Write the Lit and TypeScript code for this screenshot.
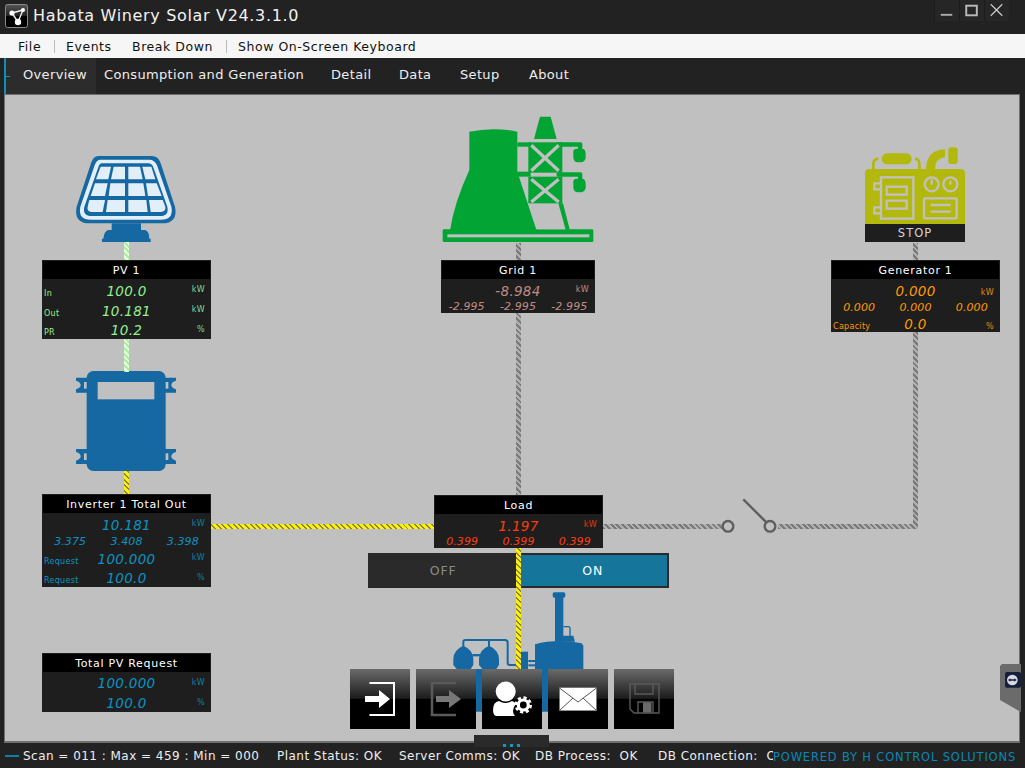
import { LitElement, html, css, svg } from "lit";
import { customElement } from "lit/decorators.js";

const OX = 5, OY = 95;
const box = (x: number, y: number, w: number, h: number) =>
  `left:${x - OX}px;top:${y - OY}px;width:${w}px;height:${h}px`;

type Row =
  | { h: number; label?: string; value: string; unit?: string; drop?: boolean }
  | { h: number; phases: string[] };
interface Panel { title: string; x: number; y: number; w: number; h: number; color: string; unitColor: string; rows: Row[] }

const BLUE = "#0b93c2", BLUE2 = "#0c7fa8";
const panels: Panel[] = [
  { title: "PV 1", x: 42, y: 260, w: 169, h: 79, color: "#93f08f", unitColor: "#7fd8a0", rows: [
    { h: 21, label: "In", value: "100.0", unit: "kW" },
    { h: 19, label: "Out", value: "10.181", unit: "kW" },
    { h: 20, label: "PR", value: "10.2", unit: "%" } ] },
  { title: "Grid 1", x: 441, y: 260, w: 154, h: 53, color: "#c08c84", unitColor: "#c08c84", rows: [
    { h: 21, value: "-8.984", unit: "kW" },
    { h: 13, phases: ["-2.995", "-2.995", "-2.995"] } ] },
  { title: "Generator 1", x: 831, y: 260, w: 169, h: 72, color: "#ff9a00", unitColor: "#e08a10", rows: [
    { h: 21, value: "0.000", unit: "kW", drop: true },
    { h: 14, phases: ["0.000", "0.000", "0.000"] },
    { h: 18, label: "Capacity", value: "0.0", unit: "%", drop: true } ] },
  { title: "Inverter 1 Total Out", x: 42, y: 494, w: 169, h: 93, color: BLUE, unitColor: BLUE2, rows: [
    { h: 21, value: "10.181", unit: "kW" },
    { h: 14, phases: ["3.375", "3.408", "3.398"] },
    { h: 19, label: "Request", value: "100.000", unit: "kW" },
    { h: 20, label: "Request", value: "100.0", unit: "%" } ] },
  { title: "Load", x: 434, y: 495, w: 169, h: 53, color: "#ff3d0c", unitColor: "#e0380c", rows: [
    { h: 21, value: "1.197", unit: "kW" },
    { h: 13, phases: ["0.399", "0.399", "0.399"] } ] },
  { title: "Total PV Request", x: 42, y: 653, w: 169, h: 59, color: BLUE, unitColor: BLUE2, rows: [
    { h: 20, value: "100.000", unit: "kW" },
    { h: 20, value: "100.0", unit: "%" } ] },
];

const wires: { x: number; y: number; w: number; h: number; c: string }[] = [
  { x: 124, y: 242, w: 5, h: 18, c: "green" },
  { x: 124, y: 339, w: 5, h: 33, c: "green" },
  { x: 124, y: 471, w: 5, h: 24, c: "yellow" },
  { x: 211, y: 524, w: 224, h: 5, c: "yellow" },
  { x: 516, y: 548, w: 5, h: 122, c: "yellow" },
  { x: 516, y: 243, w: 5, h: 252, c: "gray" },
  { x: 913, y: 243, w: 5, h: 285, c: "gray" },
  { x: 603, y: 524, w: 120, h: 5, c: "gray" },
  { x: 778, y: 524, w: 140, h: 5, c: "gray" },
];

const tabs = [
  { t: "Overview", x: 23, w: 73 },
  { t: "Consumption and Generation", x: 104, w: 227 },
  { t: "Detail", x: 331, w: 68 },
  { t: "Data", x: 399, w: 61 },
  { t: "Setup", x: 460, w: 69 },
  { t: "About", x: 529, w: 60 },
];

const solar = svg`
  <path fill="#1668a2" d="M205 48H365Q385 48 392 70L435 200Q445 250 395 250H180Q130 250 140 200L183 70Q190 48 205 48Z"/>
  <path fill="#e3eff8" d="M212 59H358Q374 59 381 76L424 200Q432 239 392 239H183Q143 239 151 200L194 76Q199 59 212 59Z"/>
  <path fill="#1668a2" d="M216 70H354Q366 70 370 82L412 200Q418 228 390 228H185Q157 228 163 200L205 82Q208 70 216 70Z"/>
  <g fill="#e3eff8">
    <path d="M212 80H243L235 118H198Z"/><path d="M251 80H285V118H243Z"/><path d="M295 80H330L338 118H295Z"/><path d="M337 80H364L376 118H346Z"/>
    <path d="M195 130H233L225 168H182Z"/><path d="M241 130H285V168H236Z"/><path d="M295 130H340L346 168H295Z"/><path d="M348 130H380L395 168H354Z"/>
    <path d="M178 180H225L218 216H185Q170 214 173 200Z"/><path d="M233 180H285V216H228Z"/><path d="M295 180H349L353 216H295Z"/><path d="M357 180H398L406 200Q408 214 392 216H362Z"/>
  </g>
  <path fill="#1668a2" d="M245 250H333V270H345Q358 274 358 296H362V306H216V296H220Q222 274 235 270H245Z"/>`;

const inverter = svg`
  <g fill="#1668a2">
    <rect x="170" y="33" width="237" height="300" rx="20"/>
    <path d="M138 53H172V98H138V88Q152 84 152 75Q152 66 138 62Z"/>
    <path d="M138 267H172V312H138V302Q152 298 152 289Q152 280 138 276Z"/>
    <path d="M438 53H404V98H438V88Q424 84 424 75Q424 66 438 62Z"/>
    <path d="M438 267H404V312H438V302Q424 298 424 289Q424 280 438 276Z"/>
  </g>
  <g fill="#c0c0c0">
    <rect x="203" y="66" width="170" height="52"/>
    <rect x="162" y="66" width="8" height="20"/><rect x="162" y="280" width="8" height="20"/>
    <rect x="407" y="66" width="8" height="20"/><rect x="407" y="280" width="8" height="20"/>
  </g>`;

const tower = svg`
  <g fill="#02a533">
    <path d="M118 65Q190 50 262 65V185L320 362H60Q72 280 118 180Z"/>
    <path d="M330 20H362L380 87H312Z"/>
    <rect x="295" y="97" width="102" height="91"/>
    <rect x="295" y="200" width="102" height="80"/>
    <rect x="262" y="97" width="40" height="13"/><rect x="262" y="185" width="40" height="15"/>
    <rect x="380" y="97" width="68" height="13" rx="3"/><rect x="380" y="187" width="68" height="13" rx="3"/>
    <rect x="444" y="97" width="13" height="30" rx="5"/><rect x="444" y="187" width="13" height="30" rx="5"/>
    <path d="M430 124Q430 116 440 116H455Q467 116 467 132V142Q467 157 450 157H445Q430 157 430 142Z"/>
    <path d="M430 214Q430 206 440 206H455Q467 206 467 222V232Q467 247 450 247H445Q430 247 430 232Z"/>
    <path d="M385 280H399L420 362H408Z"/>
    <rect x="38" y="358" width="452" height="38" rx="4"/>
  </g>
  <g stroke="#c0c0c0" stroke-width="10" fill="none">
    <path d="M304 106L386 182M386 106L304 182M304 208L386 276M386 208L304 276"/>
  </g>
  <rect x="52" y="373" width="426" height="9" fill="#c0c0c0"/>
  <path d="M306 293H385L404 358H322Q315 320 306 293Z" fill="#c0c0c0"/>`;

const generator = svg`
  <g fill="#b3b80c">
    <path d="M135 100Q135 87 148 87H422Q435 87 435 100V252H135Z"/>
    <rect x="185" y="40" width="90" height="33" rx="16"/>
    <rect x="385" y="22" width="28" height="50" rx="8"/>
    <path d="M318 87Q320 30 375 28V52Q345 55 345 87Z"/>
  </g>
  <path d="M160 87V70Q160 58 175 56M285 56Q298 58 298 70V87" stroke="#b3b80c" stroke-width="8" fill="none"/>
  <g fill="none" stroke="#c0c0c0" stroke-width="7">
    <rect x="183" y="112" width="97" height="124"/>
    <rect x="200" y="140" width="60" height="24"/>
    <rect x="200" y="182" width="60" height="24"/>
    <path d="M183 130H163V148H183M183 202H163V220H183"/>
    <circle cx="335" cy="133" r="21"/><circle cx="391" cy="133" r="21"/>
    <path d="M335 118V134M391 122V134"/>
    <rect x="312" y="175" width="98" height="60" rx="3"/>
    <path d="M332 195H392M332 215H392"/>
  </g>`;

const factory = svg`
  <g fill="#1668a2">
    <rect x="645" y="30" width="25" height="125"/>
    <rect x="638" y="22" width="38" height="16" rx="5"/>
    <path d="M645 152H700L705 170H645Z"/>
    <path d="M585 178Q650 160 725 175L730 182V380H408V252H585Z"/>
    <rect x="542" y="200" width="22" height="60"/>
    <path d="M370 182Q340 195 340 222V240L350 252H392L400 240V222Q400 195 370 182Z"/>
    <path d="M447 182Q417 195 417 222V240L427 252H469L477 240V222Q477 195 447 182Z"/>
    <rect x="398" y="207" width="22" height="7"/>
    <rect x="565" y="225" width="22" height="6"/><rect x="565" y="238" width="22" height="6"/>
  </g>
  <path d="M370 185V170Q370 165 376 165H495Q503 165 503 173V235Q503 240 510 240H530M447 185V165" fill="none" stroke="#1668a2" stroke-width="6"/>
  <path d="M670 125H685Q690 125 690 130V153" fill="none" stroke="#1668a2" stroke-width="4"/>`;

@customElement("app-root")
export class AppRoot extends LitElement {
  static styles = css`
    :host { display: block; height: 100vh; overflow: hidden; font-family: "DejaVu Sans", sans-serif; background: #222; color: #fff; }
    .app { display: flex; flex-direction: column; height: 768px; }
    .title { height: 34px; flex: none; background: #222; display: flex; align-items: center; padding-left: 5px; gap: 5px; position: relative; }
    .logo { width: 23px; height: 24px; margin-top: -3px; flex: none; display: block; }
    .title-text { font-size: 16px; letter-spacing: 0.66px; color: #f2f2f2; margin-top: -4px; white-space: nowrap; }
    .win { position: absolute; left: 934px; top: 0; width: 75px; height: 21px; display: grid; grid-template-columns: repeat(3, 1fr); background: #262626; border-radius: 0 0 3px 3px; }
    .win svg { display: block; width: 25px; height: 21px; border-left: 1px solid #1c1c1c; box-sizing: border-box; }
    .menu { height: 24px; flex: none; background: #f6f6f6; color: #111; display: flex; align-items: center; font-size: 12.5px; padding-left: 18px; box-sizing: border-box; letter-spacing: 0.55px; white-space: nowrap; }
    .menu .sep { width: 1px; height: 13px; background: #bbb; flex: none; }
    .m-file { width: 36px; } .m-events { width: 66px; margin-left: 11px; } .m-break { width: 94px; }
    .m-osk { margin-left: 11px; }
    .tabs { height: 36px; flex: none; position: relative; background: #222; display: flex; align-items: center; font-size: 13px; letter-spacing: 0.34px; white-space: nowrap; box-sizing: border-box; padding-left: 6px; }
    .tabs .rail { position: absolute; left: 4px; top: 0; bottom: 0; width: 2px; background: #0e8fb8; }
    .tabs .dash { position: absolute; left: 6px; top: 18px; width: 4px; height: 1px; background: #0e8fb8; }
    .tab { height: 36px; line-height: 34px; flex: none; box-sizing: border-box; color: #eee; }
    .tab.on { background: #2c2c2c; }
    .main { flex: 1; min-height: 0; padding: 0 5px 0 4px; background: #222; display: flex; }
    .canvas { flex: 1; position: relative; background: #c0c0c0; border: 1px solid #6e6e6e; border-bottom-width: 2px; box-sizing: border-box; }
    .abs { position: absolute; }
    .abs > svg { display: block; width: 100%; height: 100%; overflow: visible; }
    .wire { position: absolute; }
    .wire.green { background: repeating-linear-gradient(45deg, #a8f29c 0 2px, #ecffe6 2px 4px); }
    .wire.yellow { background: repeating-linear-gradient(45deg, #fff000 0 2.6px, #85854f 2.6px 4px); }
    .wire.gray { background: repeating-linear-gradient(45deg, #7a7a7a 0 2px, #b0b0b0 2px 4px); }
    .panel { position: absolute; background: #1e1e1e; display: flex; flex-direction: column; box-sizing: border-box; }
    .ph { height: 19px; flex: none; box-sizing: border-box; background: #000; border: 1px solid #1e1e1e; border-bottom: 0; color: #fff; font-size: 11px; letter-spacing: 0.7px; text-align: center; line-height: 19px; white-space: nowrap; }
    .row { display: grid; grid-template-columns: 1fr auto 1fr; align-items: center; }
    .lab { font-size: 8px; padding-left: 2px; padding-top: 7px; white-space: nowrap; letter-spacing: 0.3px; }
    .val { font-size: 13.5px; font-style: italic; letter-spacing: 0.3px; white-space: nowrap; margin-top: 2px; }
    .unit { font-size: 8px; text-align: right; padding-right: 6px; letter-spacing: 0.4px; }
    .unit.drop { padding-top: 6px; }
    .phases { display: grid; grid-template-columns: repeat(3, 1fr); align-items: center; text-align: center; font-size: 11px; font-style: italic; letter-spacing: 0.1px; }
    .toggle { position: absolute; display: grid; grid-template-columns: 1fr 1fr; background: #2a2a2a; box-sizing: border-box; font-size: 12.5px; letter-spacing: 0.9px; }
    .toggle div { display: flex; align-items: center; justify-content: center; }
    .off { color: #8a8a8a; }
    .onb { color: #fff; background: #15759a; margin: 2px 2px 2px 0; }
    .stop { position: absolute; background: #1e1e1e; color: #cfd4da; font-size: 11.5px; letter-spacing: 1px; display: flex; align-items: center; justify-content: center; }
    .btns { position: absolute; display: flex; gap: 6px; }
    .btn { width: 60px; height: 60px; background: linear-gradient(#6a6a6a 0, #1c1c1c 49%, #000 50%, #000 100%); flex: none; }
    .btn svg { display: block; width: 60px; height: 60px; }
    .handle { position: absolute; background: #2a2a2a; display: flex; justify-content: center; align-items: flex-end; gap: 4px; box-sizing: border-box; }
    .handle i { width: 3px; height: 3px; background: #0e9ac8; display: block; }
    .status { height: 25px; flex: none; background: #222; display: flex; align-items: center; font-size: 12px; letter-spacing: 0.47px; white-space: nowrap; }
    .status .bar { width: 14px; height: 2px; background: #0e7fa6; margin-left: 5px; margin-right: 4px; flex: none; }
    .status .items { flex: 1; min-width: 0; overflow: hidden; display: flex; color: #eee; }
    .s1 { width: 254px; flex: none; } .s2 { width: 122px; flex: none; } .s3 { width: 136px; flex: none; } .s4 { width: 123px; flex: none; }
    .powered { flex: none; width: 252px; color: #0b87b5; font-size: 11.5px; letter-spacing: 0.82px; margin-top: 3px; }
  `;

  private icon(x: number, y: number, w: number, h: number, body: unknown) {
    return html`<div class="abs" style=${box(x, y, w, h)}><svg viewBox="0 0 ${w * 3} ${h * 3}">${body}</svg></div>`;
  }

  private panel(p: Panel) {
    return html`<div class="panel" style="${box(p.x, p.y, p.w, p.h)};color:${p.color}">
      <div class="ph">${p.title}</div>
      ${p.rows.map((r) =>
        "phases" in r
          ? html`<div class="phases" style="height:${r.h}px">${r.phases.map((v) => html`<span>${v}</span>`)}</div>`
          : html`<div class="row" style="height:${r.h}px">
              <span class="lab">${r.label ?? ""}</span>
              <span class="val">${r.value}</span>
              <span class="unit ${r.drop ? "drop" : ""}" style="color:${p.unitColor}">${r.unit ?? ""}</span>
            </div>`
      )}
    </div>`;
  }

  render() {
    return html`<div class="app">
      <div class="title">
        <svg class="logo" viewBox="0 0 23 24">
          <defs><linearGradient id="lg" x1="0" y1="0" x2="0" y2="1"><stop offset="0" stop-color="#555"/><stop offset="0.5" stop-color="#222"/><stop offset="0.5" stop-color="#000"/></linearGradient></defs>
          <rect x="0.5" y="0.5" width="22" height="23" rx="2" fill="url(#lg)" stroke="#8a8a8a"/>
          <path d="M7 9L13 18M7 9L18 6M13 18L18 6" stroke="#eee" stroke-width="1.4"/>
          <circle cx="7" cy="9" r="2.6" fill="#fff"/><circle cx="13" cy="18" r="3.2" fill="#fff"/><circle cx="18" cy="6" r="2" fill="#fff"/>
        </svg>
        <span class="title-text">Habata Winery Solar V24.3.1.0</span>
        <div class="win">
          <svg viewBox="0 0 25 21"><rect x="6" y="14" width="12" height="2" fill="#aaa"/></svg>
          <svg viewBox="0 0 25 21"><rect x="6.5" y="5.5" width="11" height="10" fill="none" stroke="#bbb" stroke-width="2"/></svg>
          <svg viewBox="0 0 25 21"><path d="M6 4L18 16M18 4L6 16" stroke="#ccc" stroke-width="1.2"/></svg>
        </div>
      </div>
      <div class="menu">
        <span class="m-file">File</span><span class="sep"></span>
        <span class="m-events">Events</span><span class="m-break">Break Down</span><span class="sep"></span>
        <span class="m-osk">Show On-Screen Keyboard</span>
      </div>
      <div class="tabs">
        <div class="rail"></div><div class="dash"></div>
        ${tabs.map((t, i) => html`<div class="tab ${i === 0 ? "on" : ""}" style=${i === 0 ? `padding-left:${t.x - 6}px;width:${t.x - 6 + t.w}px` : `margin-left:${i === 1 ? 8 : 0}px;width:${t.w}px`}>${t.t}</div>`)}
      </div>
      <div class="main">
        <div class="canvas">
          ${this.icon(340, 585, 345, 165, factory)}
          ${this.icon(30, 140, 200, 110, solar)}
          ${this.icon(30, 360, 200, 115, inverter)}
          ${this.icon(430, 110, 180, 135, tower)}
          ${this.icon(820, 140, 190, 85, generator)}
          <div class="stop" style=${box(865, 224, 100, 18)}>STOP</div>

          <div class="toggle" style=${box(368, 553, 301, 35)}>
            <div class="off">OFF</div><div class="onb">ON</div>
          </div>

          ${wires.map((w) => html`<div class="wire ${w.c}" style=${box(w.x, w.y, w.w, w.h)}></div>`)}

          ${this.icon(720, 490, 65, 50, svg`
            <circle cx="24" cy="109" r="16" fill="#c0c0c0" stroke="#5e5e5e" stroke-width="7"/>
            <circle cx="150" cy="109" r="16" fill="#c0c0c0" stroke="#5e5e5e" stroke-width="7"/>
            <path d="M70 28L140 98" stroke="#5e5e5e" stroke-width="7"/>`)}

          ${panels.map((p) => this.panel(p))}

          ${this.icon(980, 650, 41, 70, svg`
            <path d="M66 42H123V187L112 180L60 150V48Z" fill="#6b6b6b"/>
            <rect x="75" y="66" width="48" height="47" rx="5" fill="#16203c"/>
            <circle cx="97" cy="90" r="16" fill="#d8dbe2"/>
            <path d="M84 90L91 85V88H103V85L110 90L103 95V92H91V95Z" fill="#16203c"/>`)}

          <div class="btns" style=${box(350, 669, 324, 60)}>
            <div class="btn"><svg viewBox="0 0 60 60">
              <path d="M19.5 14H44V46H19.5" fill="none" stroke="#fff" stroke-width="2"/>
              <path d="M15 27H29V21L40 30L29 39V33H15Z" fill="#fff"/></svg></div>
            <div class="btn"><svg viewBox="0 0 60 60">
              <path d="M40 14H16V46H40" fill="none" stroke="#5a5a5a" stroke-width="2.5"/>
              <path d="M20 27H33V21L45 30L33 39V33H20Z" fill="#777"/></svg></div>
            <div class="btn"><svg viewBox="0 0 60 60">
              <circle cx="23.7" cy="22.5" r="10" fill="#fff"/>
              <path d="M11 41Q11 33 17 32Q23 36 30 32Q33 33 34 35Q31 38 31 42Q31 45 33 47H14Q11 46 11 41Z" fill="#fff"/>
              <circle cx="41.3" cy="36" r="5" fill="none" stroke="#fff" stroke-width="3.2"/>
              <circle cx="41.3" cy="36" r="7.4" fill="none" stroke="#fff" stroke-width="2.6" stroke-dasharray="3.2 2.6"/></svg></div>
            <div class="btn"><svg viewBox="0 0 60 60">
              <rect x="11.5" y="18.7" width="37" height="23" fill="#fff" stroke="#777" stroke-width="0.6"/>
              <path d="M11.5 19L30 33L48.5 19M11.5 41.5L25 29M48.5 41.5L35 29" fill="none" stroke="#555" stroke-width="1"/></svg></div>
            <div class="btn"><svg viewBox="0 0 60 60">
              <path d="M16 15H45V44H20L16 40Z" fill="none" stroke="#5a5a5a" stroke-width="1.4"/>
              <path d="M21 15V25H39V15M24 44V33H39V44" fill="none" stroke="#5a5a5a" stroke-width="1.4"/>
              <rect x="29" y="33.5" width="8.5" height="10" fill="#6a6a6a"/></svg></div>
          </div>

          <div class="handle" style=${box(474, 735, 75, 12)}><i></i><i></i><i></i></div>
        </div>
      </div>
      <div class="status">
        <div class="bar"></div>
        <div class="items">
          <span class="s1">Scan = 011 : Max = 459 : Min = 000</span>
          <span class="s2">Plant Status: OK</span>
          <span class="s3">Server Comms: OK</span>
          <span class="s4">DB Process:&nbsp; OK</span>
          <span>DB Connection:&nbsp; OK</span>
        </div>
        <div class="powered">POWERED BY H CONTROL SOLUTIONS</div>
      </div>
    </div>`;
  }
}
